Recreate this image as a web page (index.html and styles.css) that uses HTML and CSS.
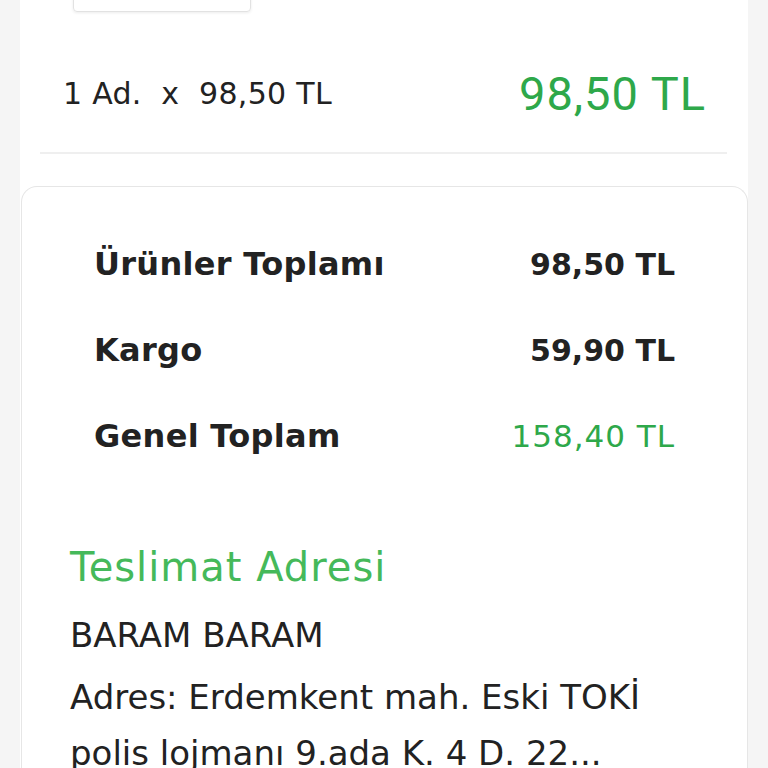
FILE: index.html
```html
<!DOCTYPE html>
<html lang="tr">
<head>
    <meta charset="UTF-8">
    <meta name="viewport" content="width=device-width,initial-scale=1">
    <title>Sipariş Özeti</title>
    <link rel="stylesheet" href="styles.css">
</head>
<body>

    <div class="page">

        <div class="qtyBox"></div>

        <div class="itemRow">
            <span class="itemQty">1 Ad. &nbsp;x &nbsp;98,50 TL</span>
            <span class="itemPrice">98,50 TL</span>
        </div>

        <div class="divider"></div>

        <div class="card">

            <div class="sumRow">
                <span class="sumName">Ürünler Toplamı</span>
                <span class="sumVal">98,50 TL</span>
            </div>
            <div class="sumRow">
                <span class="sumName">Kargo</span>
                <span class="sumVal">59,90 TL</span>
            </div>
            <div class="sumRow">
                <span class="sumName">Genel Toplam</span>
                <span class="sumVal green">158,40 TL</span>
            </div>

            <div class="address">
                <h2 class="addrTitle">Teslimat Adresi</h2>
                <p class="addrName">BARAM BARAM</p>
                <p class="addrText">Adres: Erdemkent mah. Eski TOKİ<br>polis lojmanı 9.ada K. 4 D. 22...</p>
            </div>

        </div>

    </div>

</body>
</html>
```

FILE: styles.css
```css
html {
    margin: 0;
    padding: 0;
}

body {
    margin: 0;
    padding: 0;
    background-color: #f5f5f5;
    font-family: "DejaVu Sans", sans-serif;
    color: #222;
    overflow: hidden;
}

.page {
    margin: 0 20px;
    background-color: #fff;
    min-height: 768px;
}

.qtyBox {
    width: 176px;
    height: 40px;
    margin: -30px 0 0 53px;
    border: 1px solid #e2e2e2;
    border-radius: 4px;
    box-shadow: 0 1px 3px rgba(0, 0, 0, 0.08);
}

.itemRow {
    display: flex;
    justify-content: space-between;
    align-items: center;
    height: 118px;
    padding: 22px 42px 0 43px;
}

.itemQty {
    font-size: 30px;
    letter-spacing: 0.3px;
    color: #222;
}

.itemPrice {
    font-family: Roboto, sans-serif;
    font-size: 47px;
    letter-spacing: 1px;
    color: #2ea84a;
}

.divider {
    height: 2px;
    margin: 0 21px 0 20px;
    background-color: #efefef;
}

.card {
    margin-top: 32px;
    margin-left: 1px;
    border: 1px solid #e6e6e6;
    border-bottom: none;
    border-radius: 16px 16px 0 0;
    padding: 34px 72px 0 72px;
    min-height: 600px;
}

.sumRow {
    display: flex;
    justify-content: space-between;
    align-items: center;
    height: 86px;
}

.sumName {
    font-size: 32px;
    font-weight: 700;
    letter-spacing: 0.3px;
    color: #222;
}

.sumVal {
    font-size: 30px;
    font-weight: 700;
    color: #222;
}

.sumVal.green {
    font-size: 31px;
    font-weight: 400;
    letter-spacing: 1px;
    color: #2ea84a;
}

.address {
    padding: 62px 0 0 0;
    margin-left: -24px;
}

.addrTitle {
    margin: 0;
    font-size: 40px;
    font-weight: 400;
    letter-spacing: 1px;
    color: #45b95a;
    line-height: 52px;
}

.addrName {
    margin: 18px 0 0 0;
    font-size: 34px;
    line-height: 48px;
}

.addrText {
    margin: 10px 0 0 0;
    font-size: 34px;
    line-height: 56px;
}
```
